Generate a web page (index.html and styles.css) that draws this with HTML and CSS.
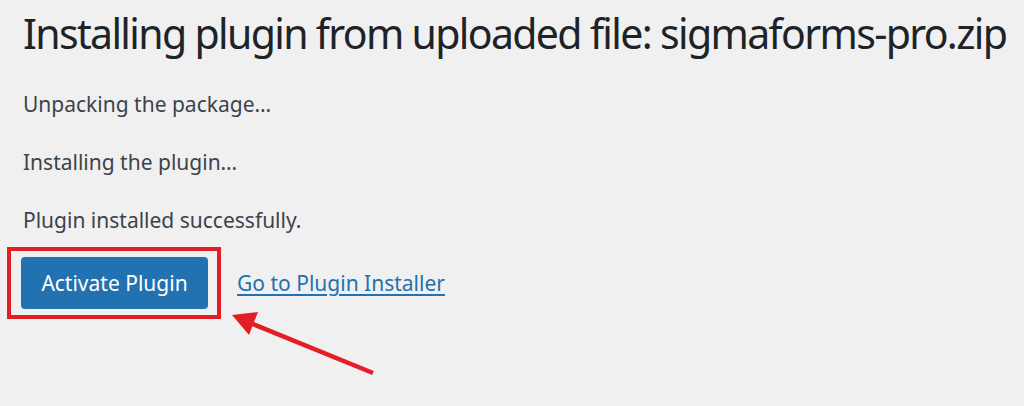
FILE: index.html
```html
<!DOCTYPE html>
<html>
<head>
<meta charset="utf-8">
<link rel="stylesheet" href="styles.css">
</head>
<body>
<div class="wrap">
  <h1 class="title">Installing plugin from uploaded file: sigmaforms-pro.zip</h1>
  <p class="step">Unpacking the package…</p>
  <p class="step">Installing the plugin…</p>
  <p class="step">Plugin installed successfully.</p>
  <div class="actions">
    <div class="highlight"><a class="button" href="#">Activate Plugin</a></div>
    <a class="link" href="#">Go to Plugin Installer</a>
  </div>
  <svg class="arrow" width="160" height="80" viewBox="220 305 160 80">
    <line x1="373" y1="373" x2="248" y2="322" stroke="#e31e24" stroke-width="4.5" stroke-linecap="butt"/>
    <polygon points="232,315 258,312 249,335" fill="#e31e24"/>
  </svg>
</div>
</body>
</html>
```
FILE: styles.css
```css
html, body {
  margin: 0;
  padding: 0;
  background: #f0f0f1;
}
body {
  font-family: "Noto Sans", "Open Sans", sans-serif;
  color: #3c434a;
}
.wrap {
  position: relative;
  width: 1024px;
  height: 406px;
  padding: 0 0 0 23px;
  box-sizing: border-box;
  display: flex;
  flex-direction: column;
  align-items: flex-start;
}
.title {
  margin: 7px 0 0 0;
  font-weight: 400;
  font-size: 41px;
  line-height: 52px;
  color: #1d2327;
  letter-spacing: -1.65px;
  white-space: nowrap;
}
.step {
  margin: 0;
  font-size: 21px;
  line-height: 29px;
  color: #3c434a;
}
.step:nth-of-type(1) { margin-top: 31px; }
.step + .step { margin-top: 29px; }
.actions {
  margin-top: 12px;
  margin-left: -16px;
  display: flex;
  align-items: center;
}
.highlight {
  border: 4px solid #e31e24;
  padding: 6px 9px 6px 10px;
}
.button {
  display: block;
  width: 187px;
  height: 52px;
  box-sizing: border-box;
  background: #2271b1;
  border-radius: 4px;
  color: #ffffff;
  text-decoration: none;
  font-size: 21px;
  line-height: 52px;
  text-align: center;
}
.link {
  margin-left: 16px;
  color: #2271b1;
  font-size: 21px;
  text-decoration: underline;
  text-underline-offset: 3px;
  text-decoration-thickness: 2px;
}
.arrow {
  position: absolute;
  left: 220px;
  top: 305px;
}
```
